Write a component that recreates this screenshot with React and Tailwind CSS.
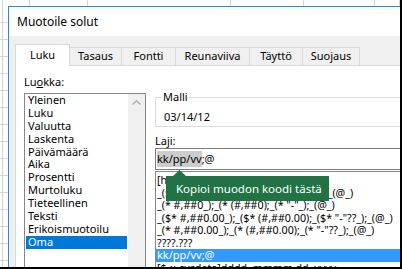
import React from "react";

const categories = [
  "Yleinen",
  "Luku",
  "Valuutta",
  "Laskenta",
  "Päivämäärä",
  "Aika",
  "Prosentti",
  "Murtoluku",
  "Tieteellinen",
  "Teksti",
  "Erikoismuotoilu",
  "Oma",
];

const formats = [
  "[h]:mm:ss",
  '_($* #,##0_);_($* (#,##0);_($* "-"_);_(@_)',
  '_(* #,##0_);_(* (#,##0);_(* "-"_);_(@_)',
  '_($* #,##0.00_);_($* (#,##0.00);_($* "-"??_);_(@_)',
  '_(* #,##0.00_);_(* (#,##0.00);_(* "-"??_);_(@_)',
  "????.???",
  "kk/pp/vv;@",
  "[$-x-sysdate]dddd, mmmm dd, yyyy",
];

const tabs = [
  { label: "Luku", w: "w-[55px]", active: true },
  { label: "Tasaus", w: "w-[52px]" },
  { label: "Fontti", w: "w-[54px]" },
  { label: "Reunaviiva", w: "w-[74px]" },
  { label: "Täyttö", w: "w-[53px]" },
  { label: "Suojaus", w: "w-[57px]" },
];

// excel sheet peeking out behind the dialog
const topCells = ["w-[3px]", "w-[27px]", "w-[58px]", "w-[143px]", "w-[73px]", "w-[71px]", "flex-1"];
const sideRows = [17, 17, 17, 17, 17, 17, 17, 17, 17, 17, 17, 17, 17, 17, 17, 17];

export default function App() {
  return (
    <div className="w-[402px] h-[269px] overflow-hidden bg-white border-r-2 border-b-2 border-black flex flex-col font-['Noto_Sans',sans-serif] text-[11px] text-black">
      {/* top strip of the sheet */}
      <div className="h-[6px] shrink-0 flex">
        {topCells.map((c, i) => (
          <div key={i} className={`${c} h-full border-r border-[#d4d4d4]`} />
        ))}
      </div>

      <div className="flex flex-1 min-h-0">
        {/* left strip of the sheet */}
        <div className="w-[8px] shrink-0 flex flex-col">
          {sideRows.map((h, i) => (
            <div key={i} className="h-[17px] shrink-0 border-b border-[#d4d4d4] flex">
              <div className="w-[3px] h-full border-r border-[#d4d4d4]" />
            </div>
          ))}
        </div>

        {/* dialog */}
        <div className="flex-1 min-w-0 overflow-hidden border-l border-t border-[#2a8ad4] bg-[#f0f0f0] flex flex-col">
          <div className="h-[29px] shrink-0 bg-white flex items-center pl-[8px] text-[12px]">
            Muotoile solut
          </div>

          <div className="flex-1 flex flex-col pt-[8px] pl-[6px]">
            {/* tabs */}
            <div className="flex items-end h-[21px] shrink-0">
              {tabs.map((t) =>
                t.active ? (
                  <div
                    key={t.label}
                    className={`${t.w} h-[22px] -mb-px relative z-10 bg-white border-l border-t border-r border-[#d9d9d9] flex items-center justify-center pb-[1px]`}
                  >
                    {t.label}
                  </div>
                ) : (
                  <div
                    key={t.label}
                    className={`${t.w} h-[18px] bg-[#f0f0f0] border-t border-r border-[#d9d9d9] flex items-center justify-center`}
                  >
                    {t.label}
                  </div>
                )
              )}
            </div>

            {/* tab panel */}
            <div className="w-[420px] flex-1 bg-white border border-[#d9d9d9] flex gap-[9px] pl-[8px] pt-[9px]">
              {/* category column */}
              <div className="w-[122px] shrink-0 flex flex-col">
                <div className="leading-[14px]">
                  Lu<span className="underline">o</span>kka:
                </div>
                <div className="mt-[4px] flex-1 border border-[#828790] flex">
                  <div className="flex-1 px-px">
                    {categories.map((c) => (
                      <div
                        key={c}
                        className={`h-[12.9px] leading-[12.9px] pl-[2px] ${
                          c === "Oma" ? "bg-[#0078d7] text-white" : ""
                        }`}
                      >
                        {c}
                      </div>
                    ))}
                  </div>
                  <div className="w-[17px] bg-[#f0f0f0] flex justify-center pt-[6px]">
                    <svg width="9" height="5" viewBox="0 0 9 5">
                      <path d="M0.5 4.5 L4.5 0.8 L8.5 4.5" fill="none" stroke="#a3a3a3" strokeWidth="1.1" />
                    </svg>
                  </div>
                </div>
              </div>

              {/* type column */}
              <div className="flex-1 flex flex-col pt-[15px]">
                <fieldset className="border border-[#dcdcdc] pl-[6px] pb-[2px]">
                  <legend className="px-px leading-[14px]">Malli</legend>
                  <div className="pl-[2px] pt-[6px] leading-[14px]">03/14/12</div>
                </fieldset>

                <div className="mt-[7px] leading-[14px]">
                  La<span className="underline">j</span>i:
                </div>
                <div className="h-[22px] border border-[#7a7a7a] flex items-center pl-px">
                  <span className="bg-[#cccccc]">kk/pp/vv</span>
                  <span>;@</span>
                </div>

                <div className="mt-[1px] flex-1 border border-[#828790] relative pt-[2px] text-[10.7px]">
                  {formats.map((f) => (
                    <div
                      key={f}
                      className={`h-[12.5px] leading-[12.5px] pl-[1px] whitespace-nowrap ${
                        f === "kk/pp/vv;@" ? "bg-[#3399ff] text-white text-[11px]" : ""
                      }`}
                    >
                      {f}
                    </div>
                  ))}

                  {/* tooltip */}
                  <div className="absolute left-[10px] top-[4px] w-[163px] h-[25px] bg-[#217346] text-white text-[11.5px] flex items-center pl-[10px]">
                    <svg className="absolute -top-[6px] left-[7px]" width="13" height="6" viewBox="0 0 13 6">
                      <path d="M0 6 L6.5 0 L13 6 Z" fill="#217346" />
                    </svg>
                    Kopioi muodon koodi tästä
                  </div>
                </div>
              </div>
            </div>
          </div>
        </div>
      </div>
    </div>
  );
}
